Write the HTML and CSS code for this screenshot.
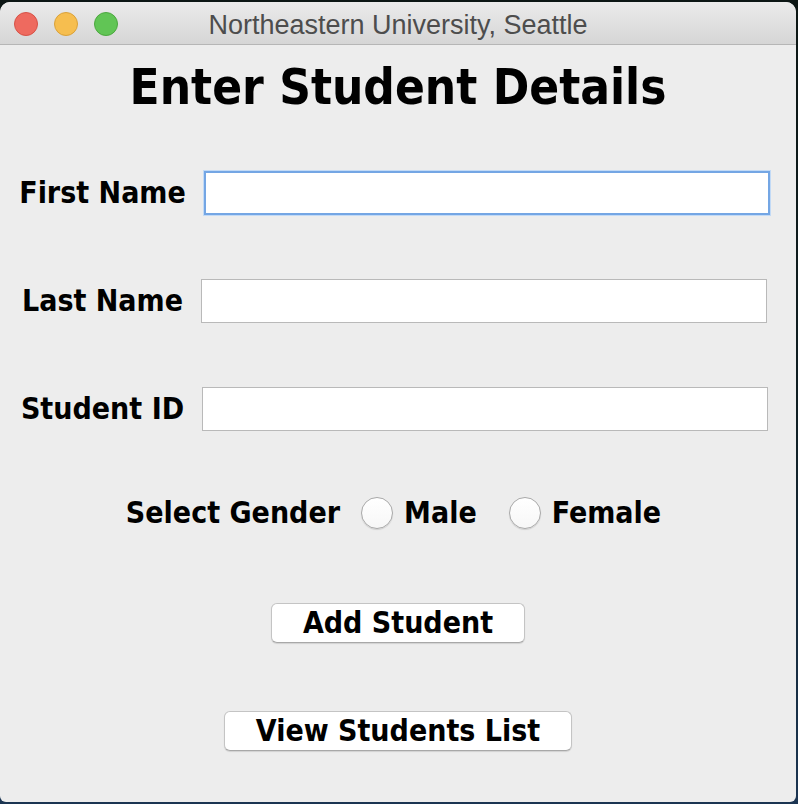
FILE: index.html
```html
<!DOCTYPE html>
<html lang="en">
<head>
<meta charset="utf-8">
<title>Northeastern University, Seattle</title>
<link rel="stylesheet" href="styles.css">
</head>
<body>
<div class="window">
  <div class="titlebar">
    <div class="lights">
      <span class="light red"></span>
      <span class="light yellow"></span>
      <span class="light green"></span>
    </div>
    <div class="title">Northeastern University, Seattle</div>
  </div>
  <div class="content">
    <h1 class="heading">Enter Student Details</h1>
    <div class="row row-first">
      <label class="label">First Name</label>
      <div class="field focused"></div>
    </div>
    <div class="row">
      <label class="label">Last Name</label>
      <div class="field"></div>
    </div>
    <div class="row">
      <label class="label">Student ID</label>
      <div class="field"></div>
    </div>
    <div class="gender">
      <span class="label">Select Gender</span>
      <span class="option"><span class="radio"></span><span class="label">Male</span></span>
      <span class="option"><span class="radio"></span><span class="label">Female</span></span>
    </div>
    <div class="button btn-add">Add Student</div>
    <div class="button btn-view">View Students List</div>
  </div>
</div>
</body>
</html>
```

FILE: styles.css
```css
html, body {
  margin: 0;
  padding: 0;
}
body {
  width: 798px;
  height: 804px;
  background: linear-gradient(#0c1614 0%, #0f1e22 50%, #1b3552 100%);
  overflow: hidden;
}
.window {
  margin-top: 2px;
  width: 796px;
  height: 800px;
  background: #ededed;
  border-radius: 10px 10px 6px 6px;
  overflow: hidden;
  display: flex;
  flex-direction: column;
}
.titlebar {
  height: 42px;
  flex: none;
  position: relative;
  background: linear-gradient(#ebebeb, #d6d6d6);
  border-bottom: 1px solid #b6b6b6;
  display: flex;
  align-items: center;
  justify-content: center;
}
.lights {
  position: absolute;
  left: 14px;
  top: 10px;
  display: flex;
  gap: 16px;
}
.light {
  width: 22px;
  height: 22px;
  border-radius: 50%;
  display: block;
}
.red { background: #ee6a5f; border: 1px solid #d65247; }
.yellow { background: #f6be4f; border: 1px solid #d9a13a; }
.green { background: #61c555; border: 1px solid #4ca73f; }
.title {
  font-family: "Liberation Sans", Arial, sans-serif;
  font-size: 27px;
  color: #4d4d4d;
  margin-top: 4px;
}
.content {
  display: flex;
  flex-direction: column;
  align-items: center;
  font-family: "DejaVu Sans Condensed", "DejaVu Sans", sans-serif;
  font-stretch: condensed;
  font-weight: bold;
  color: #000;
}
.heading {
  margin: 15px 0 0 0;
  font-size: 49px;
  line-height: 56px;
  font-weight: bold;
}
.row {
  display: flex;
  align-items: center;
  gap: 18px;
  height: 44px;
  margin-top: 64px;
  margin-right: 7px;
}
.row-first {
  margin-top: 55px;
}
.label {
  font-size: 30px;
  line-height: 36px;
  white-space: nowrap;
}
.field {
  width: 564px;
  height: 42px;
  background: #fff;
  border: 1px solid #b9b9b9;
}
.field.focused {
  width: 562px;
  height: 40px;
  border: 2px solid #74a6e4;
  box-shadow: 0 0 0 1px #c2daf6;
}
.gender {
  display: flex;
  align-items: center;
  height: 36px;
  margin-top: 64px;
  margin-right: 9px;
  gap: 21px;
}
.option {
  display: flex;
  align-items: center;
  gap: 11px;
}
.option + .option {
  margin-left: 11px;
}
.radio {
  width: 30px;
  height: 30px;
  border-radius: 50%;
  background: linear-gradient(#ffffff, #f7f7f7);
  border: 1px solid #a9a9a9;
  box-shadow: 0 1px 1px rgba(0,0,0,0.12);
  display: block;
}
.button {
  height: 38px;
  line-height: 38px;
  background: #fff;
  border: 1px solid #c4c4c4;
  border-bottom-color: #a8a8a8;
  border-radius: 6px;
  box-shadow: 0 1px 1px rgba(0,0,0,0.12);
  font-size: 30px;
  text-align: center;
}
.btn-add {
  width: 252px;
  margin-top: 72px;
}
.btn-view {
  width: 346px;
  margin-top: 68px;
}
```
